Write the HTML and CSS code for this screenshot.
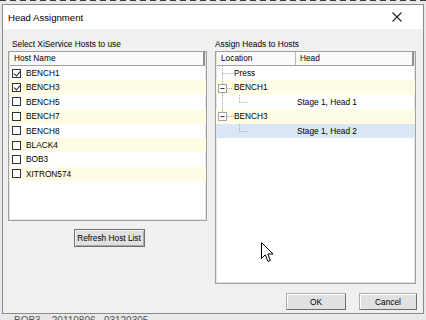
FILE: index.html
```html
<!DOCTYPE html>
<html>
  <head>
    <meta charset="utf-8" />
    <title>Head Assignment</title>
    <link rel="stylesheet" href="styles.css">
  </head>
  <body>
    <div class="desktop">
      <div class="dialog">
        <div class="titlebar">
          <span class="title">Head Assignment</span>
          <svg class="close" width="10" height="10" viewBox="0 0 10 10">
            <path d="M0.5 0.5 L9.5 9.5 M9.5 0.5 L0.5 9.5" stroke="#222" stroke-width="1.1" fill="none" />
          </svg>
        </div>

        <div class="dialog-body">
          <!-- hosts -->
          <section class="pane">
            <div class="group-label">Select XiService Hosts to use</div>
            <div class="listbox hosts">
              <div class="list-head">
                <div class="head-cell">Host Name</div>
              </div>
              <div class="row"><span class="check checked"></span>BENCH1</div>
              <div class="row alt"><span class="check checked"></span>BENCH3</div>
              <div class="row"><span class="check"></span>BENCH5</div>
              <div class="row alt"><span class="check"></span>BENCH7</div>
              <div class="row"><span class="check"></span>BENCH8</div>
              <div class="row alt"><span class="check"></span>BLACK4</div>
              <div class="row"><span class="check"></span>BOB3</div>
              <div class="row alt"><span class="check"></span>XITRON574</div>
            </div>
            <div class="refresh-bar">
              <button class="btn btn-refresh">Refresh Host List</button>
            </div>
          </section>

          <!-- heads -->
          <section class="pane">
            <div class="group-label">Assign Heads to Hosts</div>
            <div class="listbox tree">
              <div class="list-head">
                <div class="head-cell loc">Location</div>
                <div class="head-cell">Head</div>
              </div>
              <div class="tree-row">
                <div class="loc">
                  <svg class="lines" width="17" height="14" viewBox="0 0 17 14">
                    <path d="M5.5 0 V14 M5.5 7.5 H17" stroke="#a8a8a8" stroke-dasharray="1 1" />
                  </svg>Press
                </div>
                <div class="head"></div>
              </div>
              <div class="tree-row alt">
                <div class="loc">
                  <svg class="lines" width="17" height="14" viewBox="0 0 17 14">
                    <path d="M5.5 0 V3 M5.5 12 V14 M10 7.5 H17" stroke="#a8a8a8" stroke-dasharray="1 1" />
                    <rect x="1.5" y="3.5" width="8" height="8" fill="#fff" stroke="#9aa3b0" />
                    <path d="M3.5 7.5 H7.5" stroke="#333" />
                  </svg>BENCH1
                </div>
                <div class="head"></div>
              </div>
              <div class="tree-row">
                <div class="loc">
                  <svg class="lines" width="32" height="14" viewBox="0 0 32 14">
                    <path d="M5.5 0 V14 M22.5 0 V7 M22.5 7.5 H31" stroke="#a8a8a8" stroke-dasharray="1 1" />
                  </svg>
                </div>
                <div class="head">Stage 1, Head 1</div>
              </div>
              <div class="tree-row alt">
                <div class="loc">
                  <svg class="lines" width="17" height="14" viewBox="0 0 17 14">
                    <path d="M5.5 0 V3 M10 7.5 H17" stroke="#a8a8a8" stroke-dasharray="1 1" />
                    <rect x="1.5" y="3.5" width="8" height="8" fill="#fff" stroke="#9aa3b0" />
                    <path d="M3.5 7.5 H7.5" stroke="#333" />
                  </svg>BENCH3
                </div>
                <div class="head"></div>
              </div>
              <div class="tree-row selected">
                <div class="loc">
                  <svg class="lines" width="32" height="14" viewBox="0 0 32 14">
                    <path d="M22.5 0 V7 M22.5 7.5 H31" stroke="#a8a8a8" stroke-dasharray="1 1" />
                  </svg>
                </div>
                <div class="head">Stage 1, Head 2</div>
              </div>

              <svg class="cursor" width="13" height="21" viewBox="0 0 13 21">
                <path d="M0.5 0.5 V16.5 L4.3 12.8 L7 19.5 L9.4 18.5 L6.8 12 H12 Z" fill="#fff" stroke="#000" stroke-width="1" stroke-linejoin="round" />
              </svg>
            </div>
            <div class="actions">
              <button class="btn">OK</button>
              <button class="btn">Cancel</button>
            </div>
          </section>
        </div>
      </div>
      <div class="behind">BOB3&nbsp;&nbsp;&nbsp;&nbsp;20110806&nbsp;&nbsp;&nbsp;03120305</div>
    </div>
  </body>
</html>
```

FILE: styles.css
```css
html,
body {
  margin: 0;
  padding: 0;
}

body {
  width: 426px;
  height: 320px;
  overflow: hidden;
  background: #e8e8e8;
  font-family: "Liberation Sans", Arial, sans-serif;
  font-size: 8.3px;
  color: #000;
}

.desktop {
  height: 320px;
  padding: 3px 2px 0 2px;
  box-sizing: border-box;
  border-top: 2px dashed #3a3a3a;
  margin-top: -1px;
}

/* 对话框 */
.dialog {
  width: 422px;
  height: 310px;
  box-sizing: border-box;
  border: 1px solid #8a8a8a;
  background: #f0f0f0;
  display: flex;
  flex-direction: column;
}

.titlebar {
  height: 24px;
  background: #fff;
  display: flex;
  align-items: center;
  justify-content: space-between;
  padding: 0 21px 0 5px;
}

.title {
  font-size: 9.6px;
}

.dialog-body {
  display: grid;
  grid-template-columns: 199px 201px;
  column-gap: 8px;
  padding: 10px 0 0 5px;
}

.pane {
  display: flex;
  flex-direction: column;
}

.group-label {
  height: 11px;
  line-height: 11px;
  margin: 0 0 1px 4px;
}

.pane:last-child .group-label {
  margin-left: 0;
}

/* 列表 */
.listbox {
  position: relative;
  background: #fff;
  border: 1px solid #a0a0a0;
  box-shadow: inset 0 0 0 1px #e4e4e4;
  box-sizing: border-box;
  overflow: hidden;
}

.hosts {
  height: 170px;
}

.tree {
  height: 233px;
}

.list-head {
  display: flex;
  height: 13px;
  margin: 0 1px;
  background: #fafafa;
  border-bottom: 1px solid #a0a0a0;
}

.head-cell {
  flex: 1;
  line-height: 13px;
  padding-left: 4px;
  border-right: 2px solid #8f8f8f;
}

.head-cell.loc {
  flex: 0 0 74px;
  border-right: 1px solid #b8b8b8;
}

.row {
  height: 14.4px;
  line-height: 14.4px;
  display: flex;
  align-items: center;
  padding-left: 3px;
}

.alt {
  background: #fffce6;
}

.check {
  width: 9px;
  height: 9px;
  border: 1px solid #333;
  background: #fff;
  margin-right: 5px;
  box-sizing: border-box;
  position: relative;
}

.check.checked::after {
  content: "";
  position: absolute;
  left: 1.5px;
  top: 0;
  width: 3px;
  height: 5px;
  border: solid #222;
  border-width: 0 1px 1px 0;
  transform: rotate(40deg);
}

/* 树 */
.tree-row {
  display: flex;
  height: 14.4px;
  line-height: 14.4px;
}

.tree-row.selected {
  background: #d9e6f3;
}

.tree-row .loc {
  flex: 0 0 79px;
  display: flex;
  align-items: center;
  padding-left: 1px;
}

.tree-row .head {
  flex: 1;
  padding-left: 1px;
}

.lines {
  display: block;
  flex: none;
}

.cursor {
  position: absolute;
  left: 45px;
  top: 190px;
}

/* 按钮 */
.btn {
  font-family: inherit;
  font-size: 8.3px;
  color: #000;
  background: #e1e1e1;
  border: 1px solid #adadad;
  border-right-color: #6e6e6e;
  border-bottom-color: #6e6e6e;
  box-shadow: inset 1px 1px #fff;
  padding: 0;
  height: 17px;
}

.refresh-bar {
  display: flex;
  justify-content: center;
  margin-top: 8px;
  padding-left: 3px;
}

.btn-refresh {
  width: 71px;
  height: 18px;
  border: 1px solid #6f6f6f;
  box-shadow: inset 1px 1px #f6f6f6, inset -1px -1px #a8a8a8;
}

.actions {
  display: flex;
  justify-content: flex-end;
  gap: 13px;
  margin-top: 9px;
  margin-right: -1px;
}

.actions .btn {
  width: 60px;
}

.actions .btn:last-child {
  width: 58px;
}

.behind {
  height: 7px;
  overflow: hidden;
  line-height: 14px;
  padding-left: 12px;
  color: #555;
  font-size: 10px;
}
```
